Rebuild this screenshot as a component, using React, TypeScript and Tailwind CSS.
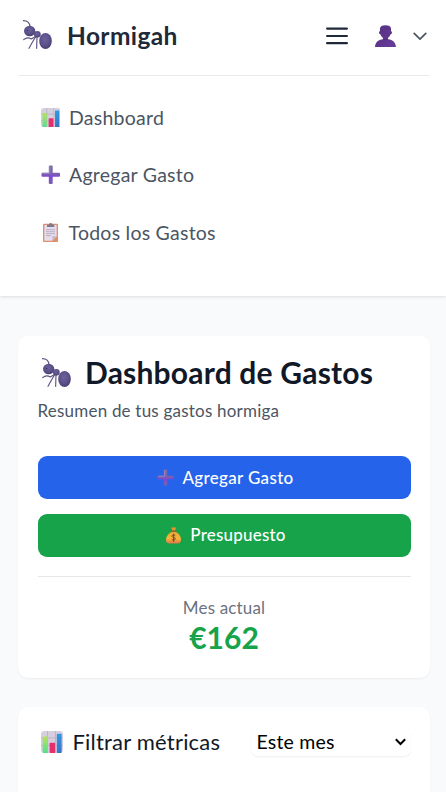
import type { ReactNode } from "react";

function Ant() {
  return (
    <svg className="shrink-0" viewBox="0 0 87 87" width="29" height="29" fill="none">
      <defs>
        <radialGradient id="antBody" cx=".45" cy=".4" r=".65">
          <stop offset="0" stopColor="#6c619c" />
          <stop offset=".6" stopColor="#5b5088" />
          <stop offset="1" stopColor="#463c6c" />
        </radialGradient>
      </defs>
      <g stroke="#5d5283" strokeWidth="3.4" strokeLinecap="round" strokeLinejoin="round">
        <path d="M1 2C12 2 20 8 21 20" />
        <path d="M36 50L25 57Q13 49 2 59" />
        <path d="M38 50L28 67L18 85" />
        <path d="M42 50L41 85" />
      </g>
      <ellipse cx="20" cy="33" rx="17" ry="15.5" fill="url(#antBody)" />
      <ellipse cx="43" cy="43" rx="10" ry="10" fill="url(#antBody)" />
      <ellipse cx="67.5" cy="63" rx="19" ry="24" fill="url(#antBody)" />
      <circle cx="14" cy="31" r="2" fill="#30284f" />
    </svg>
  );
}

function BarChart({ size }: { size: number }) {
  return (
    <svg className="shrink-0" viewBox="0 0 32 32" width={size} height={size}>
      <defs>
        <linearGradient id="barGreen" x1="0" y1="0" x2="0" y2="1">
          <stop stopColor="#b5e35c" />
          <stop offset="1" stopColor="#55e08a" />
        </linearGradient>
        <linearGradient id="barBlue" x1="0" y1="0" x2="0" y2="1">
          <stop stopColor="#2f9be6" />
          <stop offset="1" stopColor="#3a73c4" />
        </linearGradient>
      </defs>
      <rect width="32" height="32" rx="5" fill="#d6cfdf" />
      <path d="M9.5 0v32M21 0v32M0 10h32M0 21h32" stroke="#bbb2c8" strokeWidth="1.3" />
      <rect x="2.5" y="8" width="7" height="24" rx="1" fill="url(#barGreen)" />
      <rect x="12.5" y="17" width="8" height="15" rx="1" fill="#e5306e" />
      <rect x="23" y="4" width="7" height="28" rx="1" fill="url(#barBlue)" />
    </svg>
  );
}

function Plus({ size }: { size: number }) {
  return (
    <svg className="shrink-0" viewBox="0 0 20 20" width={size} height={size}>
      <defs>
        <linearGradient id="plusFill" x1="0" y1="0" x2="0" y2="1">
          <stop stopColor="#7f6ea8" />
          <stop offset=".45" stopColor="#7862ad" />
          <stop offset=".58" stopColor="#8048d2" />
          <stop offset="1" stopColor="#7a62b0" />
        </linearGradient>
      </defs>
      <path
        d="M8 1.5Q8 .5 9 .5h2q1 0 1 1V8h6.5q1 0 1 1v2q0 1-1 1H12v6.5q0 1-1 1H9q-1 0-1-1V12H1.5q-1 0-1-1V9q0-1 1-1H8Z"
        fill="url(#plusFill)"
      />
      <path d="M9 1.5v7H1.5" stroke="#a394c6" strokeWidth=".8" fill="none" />
    </svg>
  );
}

function Clipboard() {
  return (
    <svg className="mx-[2px] shrink-0" viewBox="0 0 45 57" width="15" height="19">
      <rect y="2" width="45" height="55" rx="3" fill="#de9068" />
      <path d="M4 6h37v34L28 53H4Z" fill="#e5dcec" />
      <path d="M41 40L28 53V43q0-3 3-3Z" fill="#c2b6cd" />
      <path d="M12 12V5h5q1-5 6-5t6 5h5v7Z" fill="#80788d" />
      <path d="M9 20h27M9 26h27M9 32h27M9 38h15" stroke="#b0a4bf" strokeWidth="2.4" />
    </svg>
  );
}

function MoneyBag() {
  return (
    <svg className="shrink-0" viewBox="0 0 45 50" width="15" height="17">
      <defs>
        <linearGradient id="bagFill" x1="0" y1="0" x2="0" y2="1">
          <stop stopColor="#e8a12d" />
          <stop offset=".55" stopColor="#f8b838" />
          <stop offset="1" stopColor="#e2724a" />
        </linearGradient>
      </defs>
      <path d="M16 2q3-3 6 0 4-3 8 0l-3 9h-8Z" fill="#e3972c" />
      <path d="M17 14h12c10 5 16 14 16 24q0 11-10 11H10Q0 49 0 38C0 28 7 19 17 14Z" fill="url(#bagFill)" />
      <rect x="15" y="10" width="16" height="4" rx="2" fill="#a45a32" />
      <path d="M28 26c-2-4-11-3-10 2 1 4 10 2 10 7 0 4-9 5-11 1M23 20v24" stroke="#684431" strokeWidth="2.8" fill="none" />
    </svg>
  );
}

function Person() {
  return (
    <svg viewBox="0 0 63 66" width="21" height="22">
      <defs>
        <linearGradient id="personFill" x1="0" y1="0" x2="1" y2="1">
          <stop stopColor="#533080" />
          <stop offset="1" stopColor="#6a3c9c" />
        </linearGradient>
      </defs>
      <path
        d="M16 7Q19 1 31.5 1T47 7q2 5 1 12 3 0 3 4t-4 5q-2 7-8 11v4c15 1 23 10 24 23H0c1-13 9-22 24-23v-4q-6-4-8-11-4-1-4-5t3-4q-1-7 1-12Z"
        fill="url(#personFill)"
      />
      <path d="M24 42q7 5 15 0" stroke="#48266f" strokeWidth="2" fill="none" />
    </svg>
  );
}

function MenuItem({ icon, children }: { icon: ReactNode; children: ReactNode }) {
  return (
    <a className="flex h-[57.5px] items-center gap-[9px] pl-[22.5px] text-[19.5px] tracking-[0.24px] text-[#4b5563]">
      {icon}
      <span>{children}</span>
    </a>
  );
}

export default function App() {
  return (
    <div className="h-[792px] overflow-hidden bg-[#f9fafb] font-['Lato',sans-serif] text-[#111827]">
      <header className="h-[296px] bg-white pr-[16px] pl-[18px] shadow-[0_1px_3px_rgba(0,0,0,0.12)]">
        <div className="flex h-[76px] items-center border-b border-[#e8eaed] pb-[3px] pl-[5px]">
          <div className="pb-[3px]"><Ant /></div>
          <span className="ml-[15px] text-[24.5px] font-bold tracking-[0.4px] text-[#1f2937]">Hormigah</span>
          <div className="ml-auto flex items-center pr-[3px]">
            <svg width="22" height="18" viewBox="0 0 22 18" fill="none" stroke="#1f2937" strokeWidth="2.2" strokeLinecap="round">
              <path d="M1.1 1.6h19.8M1.1 9h19.8M1.1 16.2h19.8" />
            </svg>
            <div className="ml-[27px]"><Person /></div>
            <svg className="ml-[17px]" width="14" height="9" viewBox="0 0 14 9" fill="none" stroke="#4b5563" strokeWidth="1.7" strokeLinecap="round" strokeLinejoin="round">
              <path d="M1.2 1.4L7 7.2l5.8-5.8" />
            </svg>
          </div>
        </div>
        <nav className="pt-[12.8px]">
          <MenuItem icon={<BarChart size={19.5} />}>Dashboard</MenuItem>
          <MenuItem icon={<Plus size={19.5} />}>Agregar Gasto</MenuItem>
          <MenuItem icon={<Clipboard />}>Todos los Gastos</MenuItem>
        </nav>
      </header>

      <main className="pt-[40px] pr-[16px] pl-[18px]">
        <section className="h-[342px] rounded-[10px] bg-white px-[19.5px] pt-[17.5px] shadow-[0_1px_2px_rgba(0,0,0,0.06)]">
          <h1 className="flex h-[38px] items-center pl-[4.5px] text-[30px] font-bold tracking-[0.2px]">
            <Ant />
            <span className="ml-[14px] pb-[1px]">Dashboard de Gastos</span>
          </h1>
          <p className="mt-[6px] h-[26px] text-[17px] leading-[26px] tracking-[0.21px] text-[#4b5563]">Resumen de tus gastos hormiga</p>
          <button className="mt-[32.5px] flex h-[43px] w-full items-center justify-center gap-[8px] rounded-[9px] bg-[#2563eb] pl-[3px] text-[17px] font-medium tracking-[0.33px] text-white">
            <Plus size={17} />
            <span>Agregar Gasto</span>
          </button>
          <button className="mt-[14.5px] flex h-[43px] w-full items-center justify-center gap-[9px] rounded-[9px] bg-[#16a34a] pl-[4px] text-[17px] font-medium tracking-[0.2px] text-white">
            <MoneyBag />
            <span>Presupuesto</span>
          </button>
          <div className="mt-[19.5px] border-t border-[#e5e7eb] pt-[17.5px] text-center">
            <div className="text-[17px] leading-[26px] tracking-[0.15px] text-[#6b7280]">Mes actual</div>
            <div className="text-[30px] leading-[33px] font-bold text-[#16a34a]">€162</div>
          </div>
        </section>

        <section className="mt-[29px] h-[140px] rounded-[10px] bg-white px-[19.5px] pt-[21.5px] shadow-[0_1px_2px_rgba(0,0,0,0.06)]">
          <div className="flex h-[27px] items-center">
            <div className="ml-[3.5px]"><BarChart size={22} /></div>
            <h2 className="ml-[9.5px] pb-[1px] text-[22px] tracking-[0.2px]">Filtrar métricas</h2>
            <div className="ml-auto flex h-[28px] w-[160px] items-center justify-between rounded-[7px] bg-white pr-[5px] pl-[6px] text-[19.5px] tracking-[0.2px] text-black shadow-[0_1px_2px_rgba(0,0,0,0.07)]">
              <span>Este mes</span>
              <svg width="11" height="8" viewBox="0 0 11 8" fill="none" stroke="#000" strokeWidth="2">
                <path d="M.8 1.2l4.7 4.8 4.7-4.8" />
              </svg>
            </div>
          </div>
        </section>
      </main>
    </div>
  );
}
